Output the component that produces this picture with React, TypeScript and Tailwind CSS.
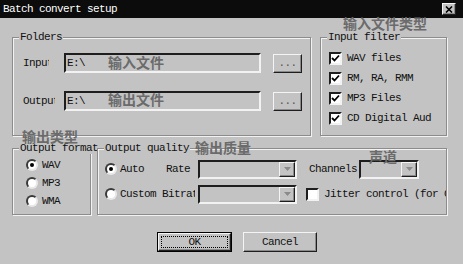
import React from 'react'

const mono = "font-['Liberation_Mono','Courier_New',monospace] text-[11px] tracking-[-0.6px] text-[#111] whitespace-nowrap"
const note = "absolute font-['Noto_Sans_CJK_SC',sans-serif] text-[14px] font-bold leading-none text-[#6b6b6b]"
const sunken = 'border-2 border-t-[#1e1e1e] border-l-[#1e1e1e] border-b-[#f2f2f2] border-r-[#f2f2f2]'
const raised = 'border border-t-[#f4f4f4] border-l-[#f4f4f4] border-b-[#1e1e1e] border-r-[#1e1e1e] shadow-[inset_-1px_-1px_0_#8a8a8a]'

function Group({ label, className, children }: { label: string; className: string; children?: React.ReactNode }) {
    return (
        <div className={`relative border border-[#8c8c8c] shadow-[inset_1px_1px_0_#f2f2f2,1px_1px_0_#f2f2f2] ${className}`}>
            <span className={`absolute -top-[7px] left-[6px] bg-[#c3c3c3] px-[1px] leading-[12px] ${mono}`}>{label}</span>
            {children}
        </div>
    )
}

function Check() {
    return (
        <div className={`w-[13px] h-[13px] bg-white flex items-center justify-center shrink-0 ${sunken}`}>
            <svg width="9" height="9" viewBox="0 0 9 9">
                <path d="M1 4 L3.5 6.5 L8 1.5" stroke="#000" strokeWidth="1.8" fill="none" />
            </svg>
        </div>
    )
}

function Radio({ on }: { on?: boolean }) {
    return (
        <div className="w-[12px] h-[12px] rounded-full bg-white border-2 border-t-[#3a3a3a] border-l-[#3a3a3a] border-b-[#e8e8e8] border-r-[#e8e8e8] flex items-center justify-center shrink-0">
            {on && <div className="w-[4px] h-[4px] rounded-full bg-black" />}
        </div>
    )
}

function Combo({ w }: { w: string }) {
    return (
        <div className={`${w} h-[19px] flex justify-end shrink-0 ${sunken}`}>
            <div className={`w-[16px] h-full bg-[#c3c3c3] flex items-center justify-center ${raised}`}>
                <svg width="7" height="4" viewBox="0 0 7 4">
                    <path d="M0 0 H7 L3.5 4 Z" fill="#8a8a8a" />
                </svg>
            </div>
        </div>
    )
}

function Field() {
    return (
        <div className={`w-[197px] h-[20px] flex items-center pl-[1px] shrink-0 ${sunken}`}>
            <span className={mono}>E:\</span>
        </div>
    )
}

function Dots() {
    return (
        <div className={`ml-[12px] w-[29px] h-[19px] bg-[#c3c3c3] flex items-center justify-center shrink-0 ${raised}`}>
            <span className={`${mono} text-[9px] text-[#555]`}>...</span>
        </div>
    )
}

export default function App() {
    const filters = ['WAV files', 'RM, RA, RMM', 'MP3 Files', 'CD Digital Aud']
    return (
        <div className="relative w-[463px] h-[264px] bg-[#c3c3c3] overflow-hidden flex flex-col">
            <div className="h-[18px] bg-[#0c0c0c] flex items-center justify-between pl-[3px] pr-[7px]">
                <span className={`${mono} text-white`}>Batch convert setup</span>
                <div className={`w-[14px] h-[12px] bg-[#c3c3c3] flex items-center justify-center ${raised}`}>
                    <svg width="8" height="7" viewBox="0 0 8 7">
                        <path d="M1 0.5 L7 6.5 M7 0.5 L1 6.5" stroke="#000" strokeWidth="1.6" />
                    </svg>
                </div>
            </div>

            <div className="flex flex-col pl-[12px] pt-[19px]">
                <div className="flex h-[99px]">
                    <Group label="Folders" className="w-[299px] h-full shrink-0">
                        <div className="pt-[15px] pl-[10px] flex flex-col gap-[18px]">
                            <div className="flex items-center">
                                <div className="w-[41px] shrink-0">
                                    <div className={`w-[26px] overflow-hidden ${mono}`}>Input</div>
                                </div>
                                <Field />
                                <Dots />
                            </div>
                            <div className="flex items-center">
                                <div className="w-[41px] shrink-0">
                                    <div className={`w-[32px] overflow-hidden ${mono}`}>Output</div>
                                </div>
                                <Field />
                                <Dots />
                            </div>
                        </div>
                    </Group>
                    <Group label="Input filter" className="ml-[9px] w-[127px] h-full shrink-0">
                        <div className="pt-[10px] pl-[8px] flex flex-col">
                            {filters.map((f) => (
                                <div key={f} className="h-[20px] flex items-center gap-[5px]">
                                    <Check />
                                    <span className={mono}>{f}</span>
                                </div>
                            ))}
                        </div>
                    </Group>
                </div>

                <div className="flex h-[67px] mt-[12px]">
                    <Group label="Output format" className="w-[79px] h-full shrink-0">
                        <div className="pt-[7px] pl-[13px] flex flex-col">
                            {['WAV', 'MP3', 'WMA'].map((f, i) => (
                                <div key={f} className="h-[18px] flex items-center gap-[4px]">
                                    <Radio on={i === 0} />
                                    <span className={mono}>{f}</span>
                                </div>
                            ))}
                        </div>
                    </Group>
                    <Group label="Output quality" className="ml-[6px] w-[350px] h-full shrink-0">
                        <div className="pt-[10px] pl-[7px] pr-[1px] flex flex-col gap-[5px] overflow-hidden">
                            <div className="h-[20px] flex items-center">
                                <div className="w-[61px] flex items-center gap-[3px] shrink-0">
                                    <Radio on />
                                    <span className={mono}>Auto</span>
                                </div>
                                <div className={`w-[32px] shrink-0 ${mono}`}>Rate</div>
                                <Combo w="w-[99px]" />
                                <div className={`ml-[12px] w-[50px] overflow-hidden shrink-0 ${mono}`}>Channels:</div>
                                <Combo w="w-[60px]" />
                            </div>
                            <div className="h-[20px] flex items-center">
                                <div className="w-[93px] flex items-center gap-[3px] shrink-0">
                                    <Radio />
                                    <div className={`w-[75px] overflow-hidden ${mono}`}>Custom Bitrate</div>
                                </div>
                                <Combo w="w-[99px]" />
                                <div className="ml-[9px] flex items-center gap-[5px] shrink-0">
                                    <div className={`w-[13px] h-[13px] bg-white shrink-0 ${sunken}`} />
                                    <span className={mono}>Jitter control (for CD)</span>
                                </div>
                            </div>
                        </div>
                    </Group>
                </div>

                <div className="flex mt-[17px] pl-[145px] gap-[11px]">
                    <div className="w-[75px] h-[20px] border border-black">
                        <div className={`h-full bg-[#c3c3c3] p-[2px] ${raised}`}>
                            <div className="h-full border border-dotted border-black flex items-center justify-center">
                                <span className={mono}>OK</span>
                            </div>
                        </div>
                    </div>
                    <div className={`w-[74px] h-[20px] bg-[#c3c3c3] flex items-center justify-center ${raised}`}>
                        <span className={mono}>Cancel</span>
                    </div>
                </div>
            </div>

            <span className={`${note} left-[343px] top-[16px]`}>输入文件类型</span>
            <span className={`${note} left-[108px] top-[55px]`}>输入文件</span>
            <span className={`${note} left-[108px] top-[92px]`}>输出文件</span>
            <span className={`${note} left-[22px] top-[129px]`}>输出类型</span>
            <span className={`${note} left-[195px] top-[140px]`}>输出质量</span>
            <span className={`${note} left-[369px] top-[149px]`}>声道</span>
        </div>
    )
}
